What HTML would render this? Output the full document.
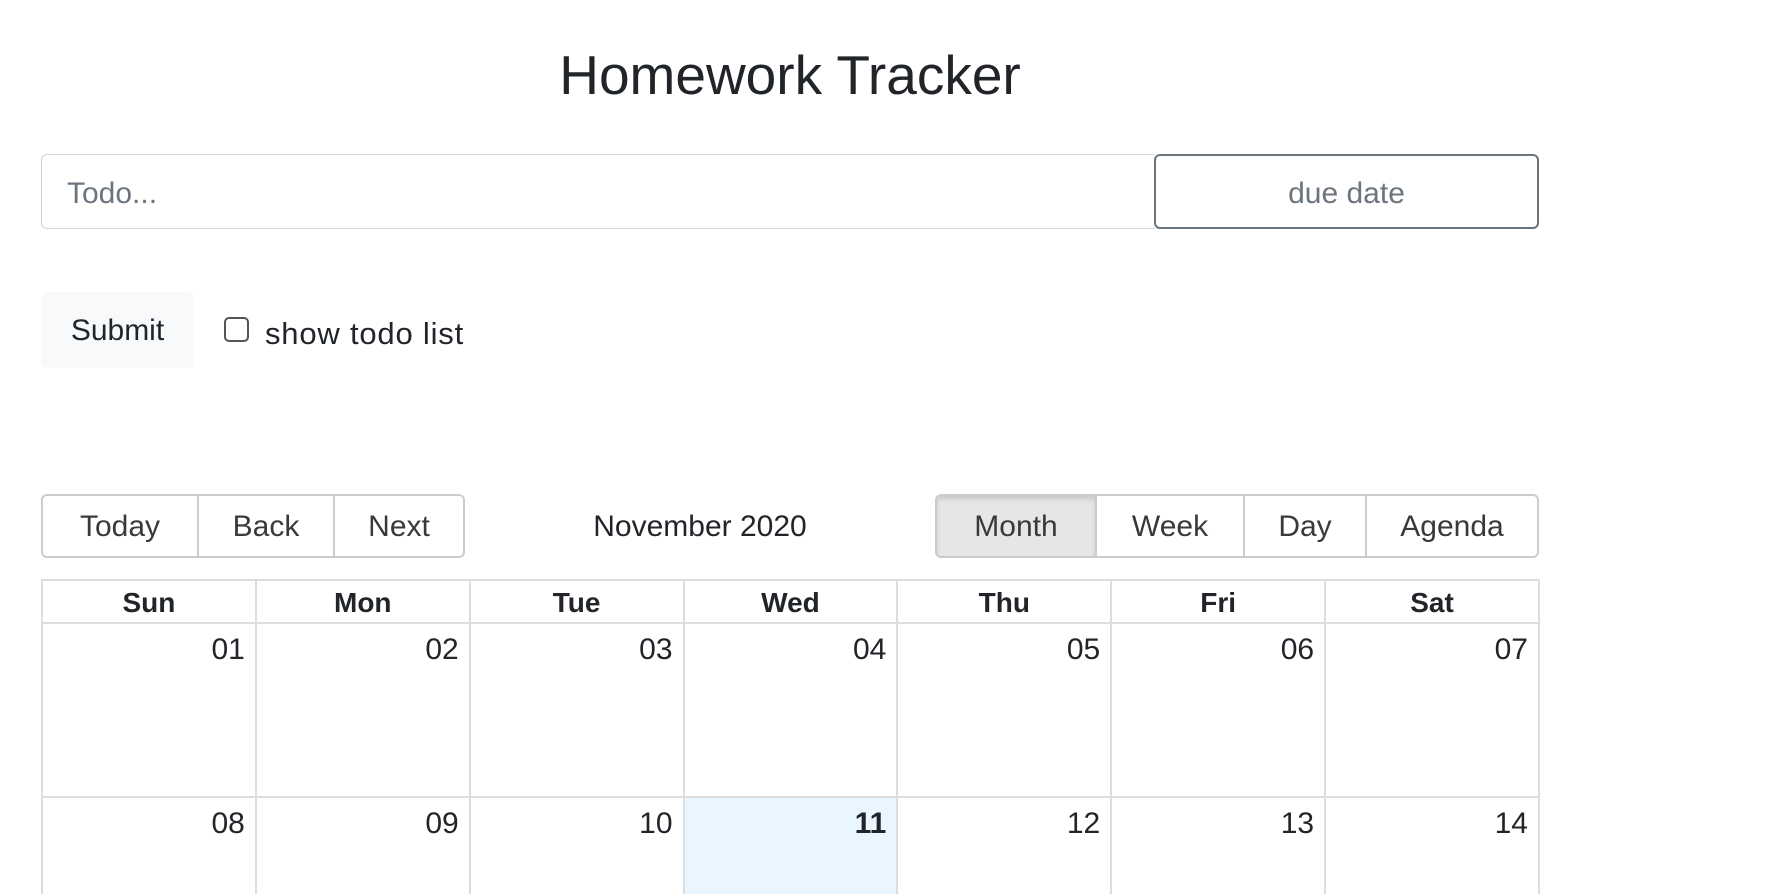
<!DOCTYPE html>
<html style="height:894px;overflow:hidden"><head><style>
*{box-sizing:border-box;margin:0;padding:0}
body{width:1770px;height:894px;overflow:hidden;background:#fff;font-family:"Liberation Sans",Arial,sans-serif;color:#212529;position:relative}
.abs{position:absolute}
h1{position:absolute;left:0;width:1580px;top:40px;text-align:center;font-size:55px;font-weight:400;line-height:70px}
.todo{left:41px;top:154px;width:1114px;height:75px;border:1.5px solid #ced4da;border-radius:6px 0 0 6px;border-right:none;font-size:30px;color:#6c757d;padding-left:25px;line-height:78px}
.due{left:1154px;top:154px;width:385px;height:75px;border:2px solid #6c757d;border-radius:6px;font-size:30px;color:#6c757d;text-align:center;line-height:75px}
.submit{left:41px;top:292px;width:153px;height:76px;background:#f8f9fa;border-radius:6px;font-size:30px;line-height:78px;text-align:center}
.cb{left:224px;top:317px;width:25px;height:25px;border:2px solid #555;border-radius:5px}
.cbl{left:265px;top:312px;font-size:31px;line-height:44px;letter-spacing:0.8px}
.grp{top:494px;height:64px;border:2px solid #ccc;border-radius:6px;display:flex;overflow:hidden}
.grp div{height:100%;font-size:30px;line-height:62px;text-align:center;color:#373a3c;border-left:2px solid #ccc}
.grp div:first-child{border-left:none}
.month{background:#e6e6e6;box-shadow:inset 0 3px 5px rgba(0,0,0,.125)}
.label{left:465px;width:470px;top:494px;line-height:66px;text-align:center;font-size:30px}
table{position:absolute;left:41px;top:579px;width:1499px;border-collapse:collapse;table-layout:fixed}
td,th{border:2px solid #ddd}
th{height:43px;font-size:28px;font-weight:700;text-align:center;padding-top:3px}
td{height:174px;vertical-align:top;text-align:right;padding:9px 10px 0 0;font-size:30px}
tr.r2 td{height:110px}
.today{background:#eaf6ff;font-weight:700}
</style></head><body>
<h1>Homework Tracker</h1>
<div class="abs todo">Todo...</div>
<div class="abs due">due date</div>
<div class="abs submit">Submit</div>
<div class="abs cb"></div>
<div class="abs cbl">show todo list</div>
<div class="abs grp" style="left:41px;width:424px">
<div style="width:154px">Today</div><div style="width:136px">Back</div><div style="flex:1">Next</div></div>
<div class="abs label">November 2020</div>
<div class="abs grp" style="left:935px;width:604px">
<div class="month" style="width:158px">Month</div><div style="width:148px">Week</div><div style="width:122px">Day</div><div style="flex:1">Agenda</div></div>
<table>
<tr><th>Sun</th><th>Mon</th><th>Tue</th><th>Wed</th><th>Thu</th><th>Fri</th><th>Sat</th></tr>
<tr><td>01</td><td>02</td><td>03</td><td>04</td><td>05</td><td>06</td><td>07</td></tr>
<tr class="r2"><td>08</td><td>09</td><td>10</td><td class="today">11</td><td>12</td><td>13</td><td>14</td></tr>
</table>
</body></html>
